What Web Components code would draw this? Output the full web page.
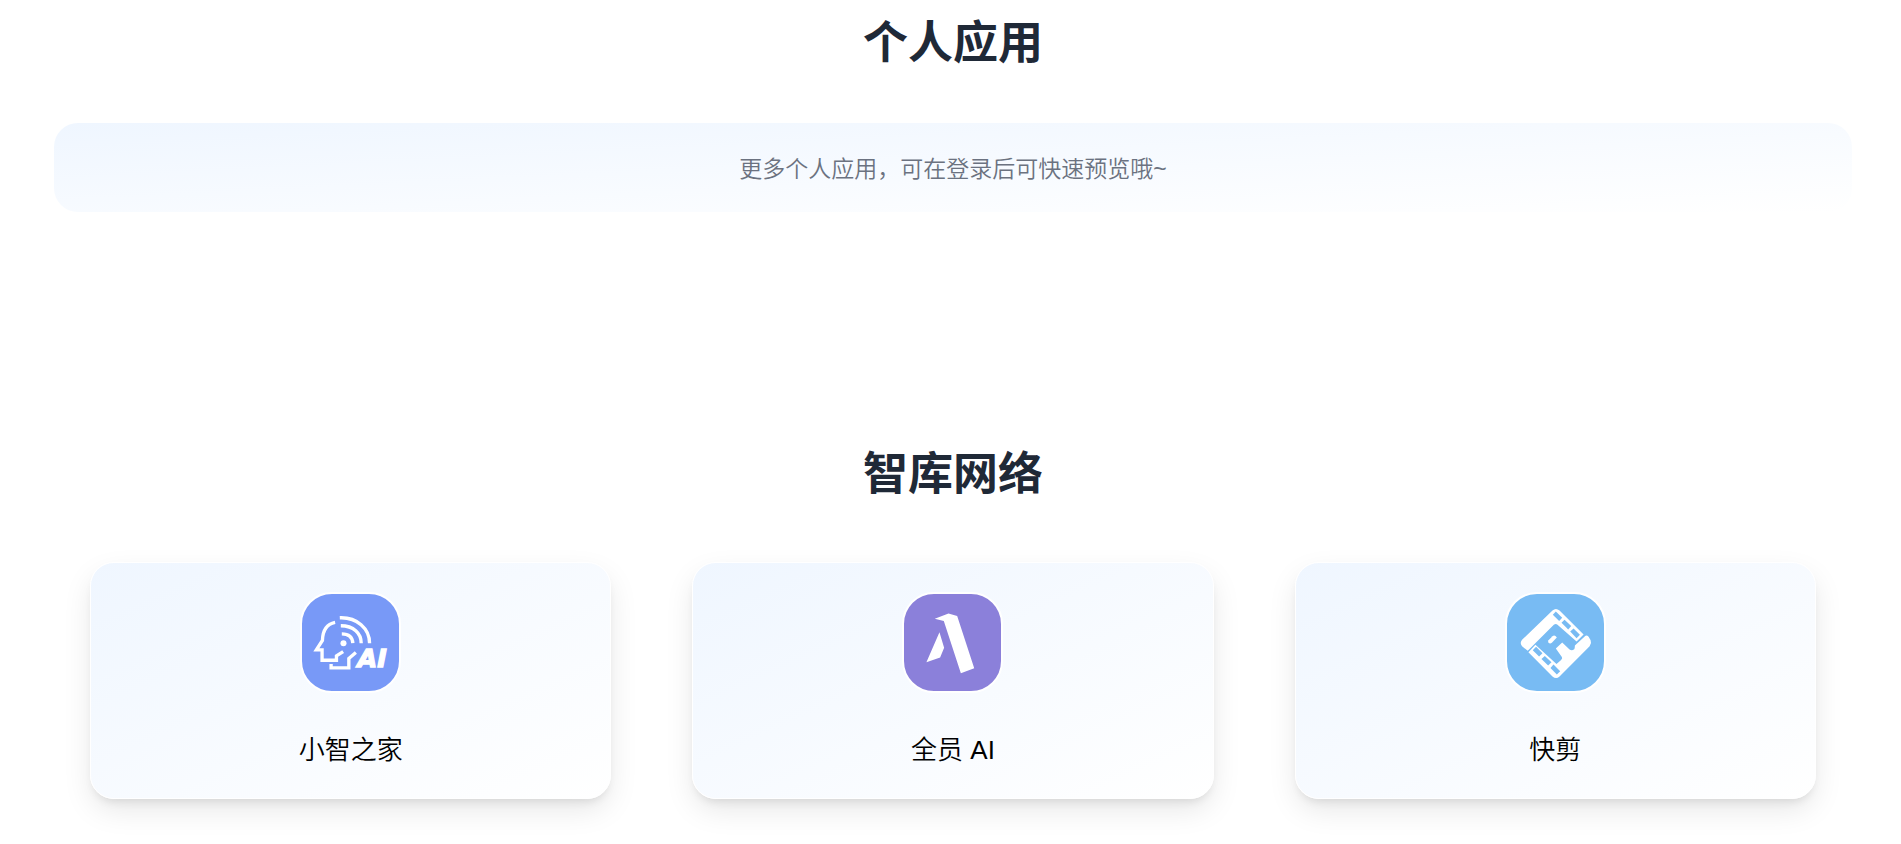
<!DOCTYPE html>
<html lang="zh-CN">
<head>
<meta charset="utf-8">
<title>应用中心</title>
<style>
  body { margin: 0; background: #fff; font-family: "Liberation Sans", "Noto Sans CJK SC", sans-serif; }
</style>
</head>
<body>
<app-page>
  <app-section heading="个人应用">
    <notice-banner>更多个人应用，可在登录后可快速预览哦~</notice-banner>
  </app-section>
  <app-section heading="智库网络">
    <card-grid>
      <app-card label="小智之家">
        <svg viewBox="37 42 290 290" width="97" height="97" style="background:#7899f7" aria-hidden="true">
          <g fill="none" stroke="#fff" stroke-width="10">
            <path d="M136 127C111 132 99 151 98 181L80 209H97V240H140V227L160 214"/>
            <path d="M124 251V263H177V235L198 217"/>
            <path d="M150 113C201 111 239 145 239 189"/>
            <path d="M153 137C191 137 214 159 214 189"/>
            <path d="M156 161C177 161 188 172 189 189"/>
          </g>
          <circle cx="161" cy="189" r="9" fill="#fff"/>
          <text x="203" y="261" fill="#fff" stroke="#fff" stroke-width="4" font-family="DejaVu Sans, sans-serif" font-size="76" font-weight="700" font-style="italic">AI</text>
        </svg>
      </app-card>
      <app-card label="全员 AI">
        <svg viewBox="43 42 290 290" width="97" height="97" style="background:#8b80da" aria-hidden="true">
          <path fill="#fff" d="M135 116L176 100L202 108L253 264L213 279L162 123ZM149 156L163 203L151 232L110 246Z"/>
        </svg>
      </app-card>
      <app-card label="快剪">
        <svg viewBox="35 42 290 290" width="97" height="97" style="background:#78bbf3" aria-hidden="true">
          <g fill="#fff">
            <path d="M97 212L80 198Q72 189 80 179L171 91Q181 82 192 91L264 163L243 184L186 134Q181 130 175 134Z"/>
            <path d="M268 168Q273 164 279 170L285 180Q289 189 282 198L192 289Q182 298 171 289L99 216L120 194L183 251L196 240Q202 234 199 230L181 205L200 187L222 208Q229 213 236 207Q238 203 238 196Z"/>
            <path d="M159 180L171 168Q178 163 184 172L169 188Q164 192 159 188Q157 184 159 180Z"/>
          </g>
          <g fill="#78bbf3">
            <path d="M181 94L200 113L191 123L172 104Z"/>
            <path d="M207 119L227 138L218 148L198 128Z"/>
            <path d="M234 145L253 164L243 174L224 154Z"/>
            <path d="M122 200L141 219L131 229L112 210Z"/>
            <path d="M148 227L168 246L158 256L138 236Z"/>
            <path d="M174 253L194 273L184 283L165 263Z"/>
          </g>
        </svg>
      </app-card>
    </card-grid>
  </app-section>
</app-page>

<script>
  function define(name, html, setup) {
    const template = document.createElement('template');
    template.innerHTML = html;
    customElements.define(name, class extends HTMLElement {
      constructor() {
        super();
        this.attachShadow({ mode: 'open' }).append(template.content.cloneNode(true));
      }
      connectedCallback() {
        if (setup) setup(this, this.shadowRoot);
      }
    });
  }

  define('app-page', `
    <style>
      :host { display: block; }
      main { display: flex; flex-direction: column; gap: 230px; padding: 11px 49px 44px 54px; }
    </style>
    <main><slot></slot></main>`);

  define('app-section', `
    <style>
      :host { display: block; }
      section { display: flex; flex-direction: column; gap: 46px; }
      h2 { margin: 0; color: #1f2937; font-size: 45px; line-height: 66px; font-weight: 700; text-align: center; }
    </style>
    <section><h2></h2><slot></slot></section>`,
    (el, root) => { root.querySelector('h2').textContent = el.getAttribute('heading'); });

  define('notice-banner', `
    <style>
      :host { display: block; }
      p {
        margin: 0; padding: 30px 24px 26px; border-radius: 24px; text-align: center;
        color: #6b7280; font-size: 23px; line-height: 33px; font-weight: 350;
        background: linear-gradient(to bottom right, #eff6ff, #fff);
      }
    </style>
    <p><slot></slot></p>`);

  define('card-grid', `
    <style>
      :host { display: block; }
      div { display: grid; grid-template-columns: repeat(3, 1fr); gap: 81px; padding: 8px 36px 0; }
    </style>
    <div><slot></slot></div>`);

  define('app-card', `
    <style>
      :host { display: block; }
      a {
        display: flex; flex-direction: column; align-items: center; gap: 37px;
        padding: 29px 24px 28px; border: 1px solid #fff; border-radius: 24px;
        color: #000; text-decoration: none;
        background: linear-gradient(to bottom right, #eff6ff, #fff);
        box-shadow: 0 12px 30px -2px rgba(0, 0, 0, .1), 0 6px 10px -4px rgba(0, 0, 0, .1);
      }
      ::slotted(svg) { display: block; border: 2px solid #fff; border-radius: 32px; }
      span { font-size: 26px; line-height: 40px; font-weight: 350; }
    </style>
    <a href="#"><slot></slot><span></span></a>`,
    (el, root) => { root.querySelector('span').textContent = el.getAttribute('label'); });
</script>
</body>
</html>
